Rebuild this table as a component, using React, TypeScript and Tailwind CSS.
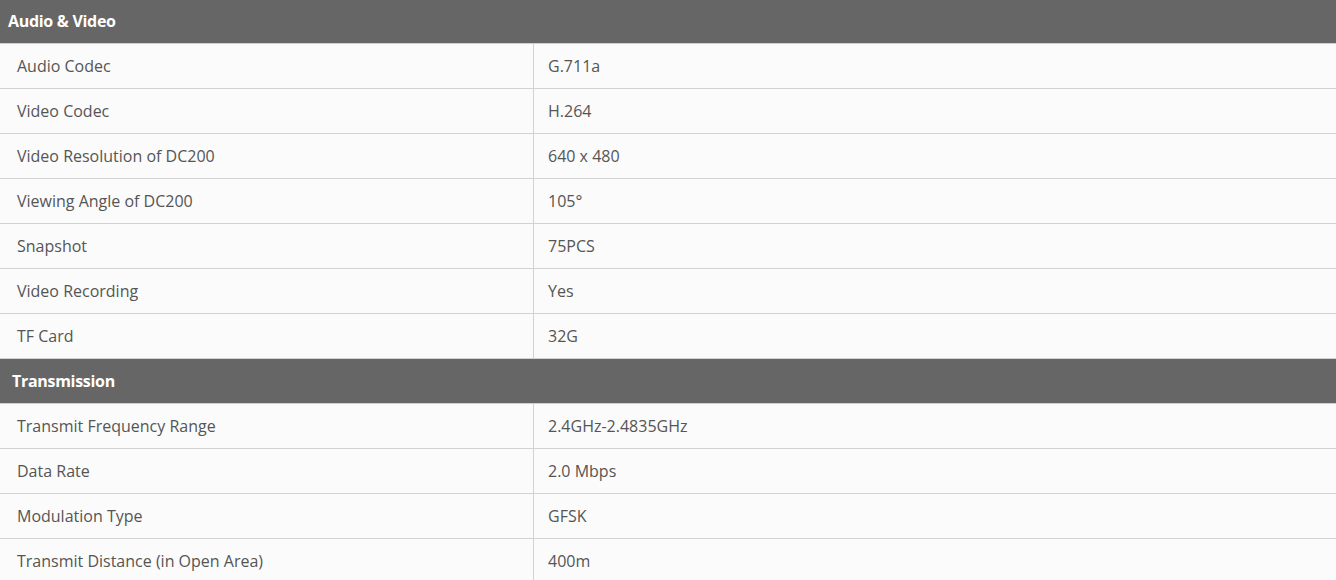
const sections = [
  {
    title: "Audio & Video",
    indent: "pl-[8px]",
    rows: [
      ["Audio Codec", "G.711a"],
      ["Video Codec", "H.264"],
      ["Video Resolution of DC200", "640 x 480"],
      ["Viewing Angle of DC200", "105°"],
      ["Snapshot", "75PCS"],
      ["Video Recording", "Yes"],
      ["TF Card", "32G"],
    ],
  },
  {
    title: "Transmission",
    indent: "pl-[12px]",
    rows: [
      ["Transmit Frequency Range", "2.4GHz-2.4835GHz"],
      ["Data Rate", "2.0 Mbps"],
      ["Modulation Type", "GFSK"],
      ["Transmit Distance (in Open Area)", "400m"],
    ],
  },
];

export default function App() {
  return (
    <div className="w-[1336px] h-[580px] overflow-hidden bg-[#fbfbfb] font-['Open_Sans',sans-serif]">
      <div className="-mt-[1px]">
        {sections.map((s) => (
          <div key={s.title}>
            <div
              className={`h-[45px] flex items-center bg-[#666666] border-b border-[#cfcfcf] text-white font-bold text-[16px] tracking-[-0.3px] ${s.indent}`}
            >
              {s.title}
            </div>
            {s.rows.map(([k, v]) => (
              <div key={k} className="h-[45px] flex border-b border-[#d2d2d2] text-[16px] text-[#555555]">
                <div className="w-[534px] shrink-0 flex items-center pl-[17px] border-r border-[#d2d2d2]">{k}</div>
                <div className="flex-1 flex items-center pl-[14px]">{v}</div>
              </div>
            ))}
          </div>
        ))}
      </div>
    </div>
  );
}
